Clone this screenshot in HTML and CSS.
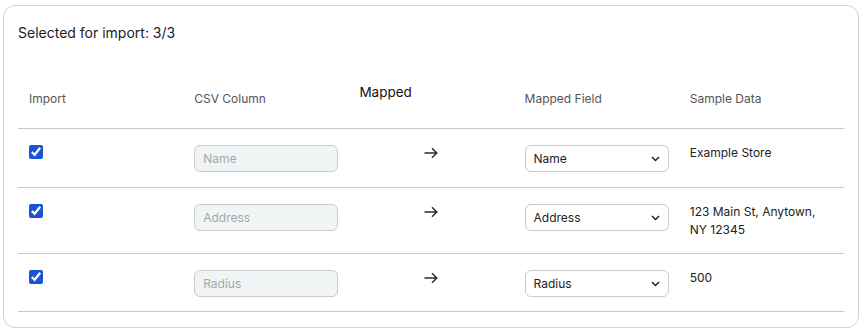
FILE: index.html
```html
<!DOCTYPE html>
<html lang="en">
<head>
    <meta charset="UTF-8">
    <meta name="viewport" content="width=device-width, initial-scale=1.0">
    <title>CSV Import Mapping</title>
    <link rel="stylesheet" href="styles.css">
</head>
<body>

<div class="card">
    <p class="summary">Selected for import: 3/3</p>

    <table class="mapping">
        <thead>
            <tr>
                <th>Import</th>
                <th>CSV Column</th>
                <th class="col-mapped">Mapped</th>
                <th>Mapped Field</th>
                <th>Sample Data</th>
            </tr>
        </thead>
        <tbody>
            <tr class="first">
                <td><input type="checkbox" checked></td>
                <td><input type="text" class="csv-col" placeholder="Name" disabled></td>
                <td class="arrow-cell">
                    <svg width="16" height="16" viewBox="0 0 16 16"><path d="M1.5 8h12.5M9 3.2 13.8 8 9 12.8" fill="none" stroke="#2b2b2b" stroke-width="1.5"/></svg>
                </td>
                <td>
                    <div class="select">
                        <span>Name</span>
                        <svg width="9" height="6" viewBox="0 0 9 6"><path d="M1 1l3.5 3.5L8 1" fill="none" stroke="#222" stroke-width="1.5"/></svg>
                    </div>
                </td>
                <td class="sample">Example Store</td>
            </tr>
            <tr>
                <td><input type="checkbox" checked></td>
                <td><input type="text" class="csv-col" placeholder="Address" disabled></td>
                <td class="arrow-cell">
                    <svg width="16" height="16" viewBox="0 0 16 16"><path d="M1.5 8h12.5M9 3.2 13.8 8 9 12.8" fill="none" stroke="#2b2b2b" stroke-width="1.5"/></svg>
                </td>
                <td>
                    <div class="select">
                        <span>Address</span>
                        <svg width="9" height="6" viewBox="0 0 9 6"><path d="M1 1l3.5 3.5L8 1" fill="none" stroke="#222" stroke-width="1.5"/></svg>
                    </div>
                </td>
                <td class="sample">123 Main St, Anytown, NY 12345</td>
            </tr>
            <tr>
                <td><input type="checkbox" checked></td>
                <td><input type="text" class="csv-col" placeholder="Radius" disabled></td>
                <td class="arrow-cell">
                    <svg width="16" height="16" viewBox="0 0 16 16"><path d="M1.5 8h12.5M9 3.2 13.8 8 9 12.8" fill="none" stroke="#2b2b2b" stroke-width="1.5"/></svg>
                </td>
                <td>
                    <div class="select">
                        <span>Radius</span>
                        <svg width="9" height="6" viewBox="0 0 9 6"><path d="M1 1l3.5 3.5L8 1" fill="none" stroke="#222" stroke-width="1.5"/></svg>
                    </div>
                </td>
                <td class="sample">500</td>
            </tr>
        </tbody>
    </table>
</div>

</body>
</html>
```

FILE: styles.css
```css
body {
    font-family: Inter, "Noto Sans", sans-serif;
    margin: 0;
    padding: 5px 3px;
    background-color: #fff;
    color: #222;
}
.card {
    width: 856px;
    box-sizing: border-box;
    border: 1px solid #d2d2d2;
    border-radius: 12px;
    padding: 15px 14px 15px 14px;
}
.summary {
    margin: 0;
    font-size: 14px;
    line-height: 24px;
    color: #222;
}
.mapping {
    width: 100%;
    margin-top: 25px;
    border-collapse: collapse;
    table-layout: fixed;
}
.mapping th {
    text-align: left;
    font-weight: normal;
    font-size: 12px;
    line-height: 18px;
    color: #555;
    padding: 20px 11px 20px 11px;
    vertical-align: top;
    border-bottom: 1px solid #c9c9c9;
}
.mapping th.col-mapped {
    font-size: 13.5px;
    color: #111;
    padding-top: 13px;
}
.mapping td {
    padding: 16px 11px 14px 11px;
    vertical-align: top;
    border-bottom: 1px solid #c9c9c9;
}
.mapping tr.first td {
    padding-bottom: 15px;
}
input[type="checkbox"] {
    display: block;
    width: 14px;
    height: 14px;
    margin: 0;
    accent-color: #1a53d8;
}
.csv-col {
    display: block;
    width: 144px;
    height: 27px;
    box-sizing: border-box;
    padding: 0 8px;
    border: 1px solid #c8cbce;
    border-radius: 6px;
    background: #f1f4f5;
    font-family: inherit;
    font-size: 12px;
}
.csv-col::placeholder {
    color: #a4a8ac;
}
.arrow-cell {
    text-align: center;
}
.arrow-cell svg {
    display: inline-block;
}
.select {
    width: 144px;
    height: 27px;
    box-sizing: border-box;
    display: flex;
    align-items: center;
    justify-content: space-between;
    padding: 0 8px 0 8px;
    border: 1px solid #c8cbce;
    border-radius: 6px;
    background: #fff;
    font-size: 12px;
    color: #222;
}
.sample {
    font-size: 12px;
    line-height: 18px;
    color: #222;
}
.mapping td.sample {
    padding-top: 15px;
}
```
